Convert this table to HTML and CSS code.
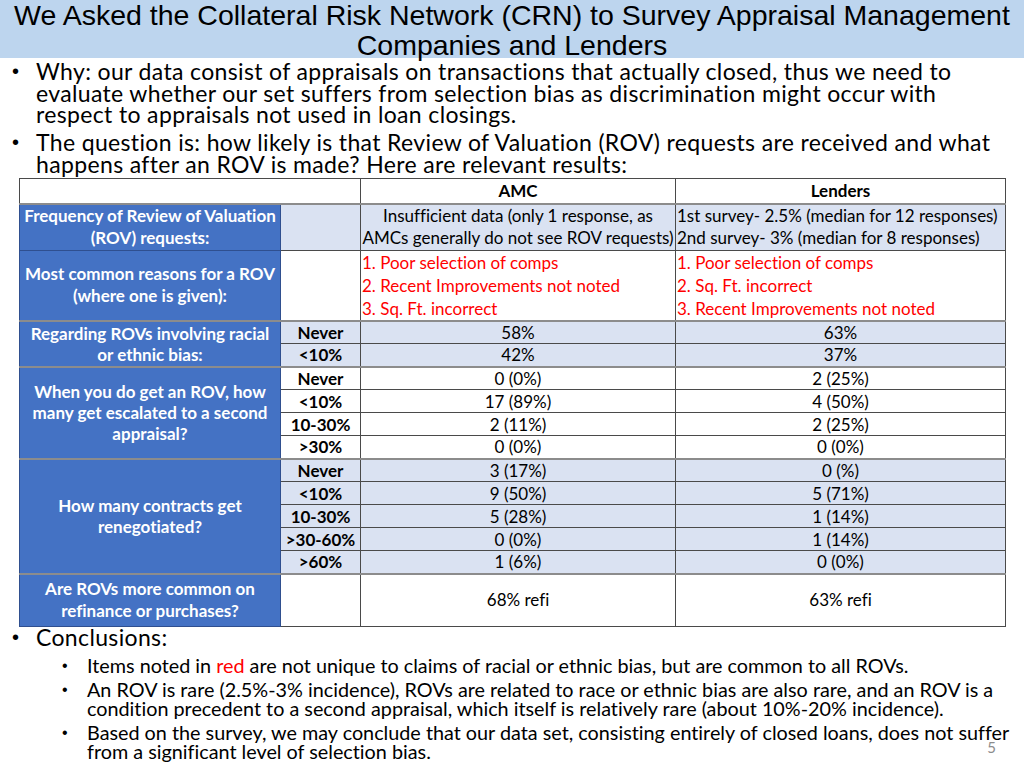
FILE: index.html
```html
<!DOCTYPE html>
<html lang="en">
<head>
<meta charset="utf-8">
<title>CRN Survey</title>
<link rel="stylesheet" href="styles.css">
</head>
<body>
<div class="slide">
  <header class="title-band">
    <h1 class="title">We Asked the Collateral Risk Network (CRN) to Survey Appraisal Management<br>Companies and Lenders</h1>
  </header>

  <div class="bullets intro">
    <div class="bullet">
      <span class="dot">•</span>
      <p class="btext">Why: our data consist of appraisals on transactions that actually closed, thus we need to<br>evaluate whether our set suffers from selection bias as discrimination might occur with<br>respect to appraisals not used in loan closings.</p>
    </div>
    <div class="bullet b2">
      <span class="dot">•</span>
      <p class="btext">The question is: how likely is that Review of Valuation (ROV) requests are received and what<br>happens after an ROV is made? Here are relevant results:</p>
    </div>
  </div>

  <div class="table-wrap">
    <table class="results">
      <colgroup>
        <col class="c-label"><col class="c-sub"><col class="c-amc"><col class="c-len">
      </colgroup>
      <tr class="r-head">
        <td colspan="2" class="blank"></td>
        <td class="hd">AMC</td>
        <td class="hd">Lenders</td>
      </tr>
      <tr class="r-freq shade sec">
        <td class="lbl">Frequency of Review of Valuation<br>(ROV) requests:</td>
        <td class="sub"></td>
        <td class="val">Insufficient data (only 1 response, as<br>AMCs generally do not see ROV requests)</td>
        <td class="val left">1st survey- 2.5% (median for 12 responses)<br>2nd survey- 3% (median for 8 responses)</td>
      </tr>
      <tr class="r-reasons">
        <td class="lbl">Most common reasons for a ROV<br>(where one is given):</td>
        <td class="sub"></td>
        <td class="val left red">1. Poor selection of comps<br>2. Recent Improvements not noted<br>3. Sq. Ft. incorrect</td>
        <td class="val left red">1. Poor selection of comps<br>2. Sq. Ft. incorrect<br>3. Recent Improvements not noted</td>
      </tr>
      <tr class="r shade sec">
        <td class="lbl" rowspan="2">Regarding ROVs involving racial<br>or ethnic bias:</td>
        <td class="sub">Never</td><td class="val">58%</td><td class="val">63%</td>
      </tr>
      <tr class="r shade">
        <td class="sub">&lt;10%</td><td class="val">42%</td><td class="val">37%</td>
      </tr>
      <tr class="r sec">
        <td class="lbl" rowspan="4">When you do get an ROV, how<br>many get escalated to a second<br>appraisal?</td>
        <td class="sub">Never</td><td class="val">0 (0%)</td><td class="val">2 (25%)</td>
      </tr>
      <tr class="r"><td class="sub">&lt;10%</td><td class="val">17 (89%)</td><td class="val">4 (50%)</td></tr>
      <tr class="r"><td class="sub">10-30%</td><td class="val">2 (11%)</td><td class="val">2 (25%)</td></tr>
      <tr class="r"><td class="sub">&gt;30%</td><td class="val">0 (0%)</td><td class="val">0 (0%)</td></tr>
      <tr class="r shade sec">
        <td class="lbl" rowspan="5">How many contracts get<br>renegotiated?</td>
        <td class="sub">Never</td><td class="val">3 (17%)</td><td class="val">0 (%)</td>
      </tr>
      <tr class="r shade"><td class="sub">&lt;10%</td><td class="val">9 (50%)</td><td class="val">5 (71%)</td></tr>
      <tr class="r shade"><td class="sub">10-30%</td><td class="val">5 (28%)</td><td class="val">1 (14%)</td></tr>
      <tr class="r shade"><td class="sub">&gt;30-60%</td><td class="val">0 (0%)</td><td class="val">1 (14%)</td></tr>
      <tr class="r shade"><td class="sub">&gt;60%</td><td class="val">1 (6%)</td><td class="val">0 (0%)</td></tr>
      <tr class="r-refi sec">
        <td class="lbl">Are ROVs more common on<br>refinance or purchases?</td>
        <td class="sub"></td>
        <td class="val">68% refi</td>
        <td class="val">63% refi</td>
      </tr>
    </table>
  </div>

  <div class="bullets concl">
    <div class="bullet">
      <span class="dot">•</span>
      <p class="btext">Conclusions:</p>
    </div>
    <ul class="subs">
      <li class="sb"><span class="sdot">•</span><p class="stext">Items noted in <span class="red">red</span> are not unique to claims of racial or ethnic bias, but are common to all ROVs.</p></li>
      <li class="sb"><span class="sdot">•</span><p class="stext">An ROV is rare (2.5%-3% incidence), ROVs are related to race or ethnic bias are also rare, and an ROV is a<br>condition precedent to a second appraisal, which itself is relatively rare (about 10%-20% incidence).</p></li>
      <li class="sb"><span class="sdot">•</span><p class="stext">Based on the survey, we may conclude that our data set, consisting entirely of closed loans, does not suffer<br>from a significant level of selection bias.</p></li>
    </ul>
  </div>

  <div class="page-num">5</div>
</div>
</body>
</html>
```

FILE: styles.css
```css
* { box-sizing: border-box; }
html, body { margin: 0; padding: 0; background: #ffffff; }
body { width: 1024px; height: 768px; overflow: hidden; }

.slide {
  position: relative;
  width: 1024px;
  height: 768px;
  font-family: Lato, "Open Sans", sans-serif;
  font-variant-ligatures: none;
  color: #000;
}

.title-band {
  background: #bdd5ee;
  height: 58px;
}
.title {
  margin: 0;
  font-family: "Liberation Sans", Arial, sans-serif;
  font-weight: normal;
  font-size: 28.5px;
  line-height: 30px;
  text-align: center;
  white-space: nowrap;
}

.bullets { padding-left: 12px; }
.intro { padding-top: 3px; }
.bullet { display: flex; align-items: flex-start; }
.dot {
  width: 24px;
  flex: none;
  font-size: 20px;
  line-height: 21.5px;
  font-family: "Liberation Sans", Arial, sans-serif;
}
.btext {
  margin: 0;
  font-size: 23px;
  letter-spacing: 0.35px;
  line-height: 21.5px;
  white-space: nowrap;
}
.b2 { margin-top: 6.5px; }

.table-wrap { padding: 3px 0 0 19px; }
.results {
  border-collapse: collapse;
  table-layout: fixed;
  width: 986px;
  font-size: 17px;
  line-height: 22.5px;
}
.c-label { width: 261px; }
.c-sub { width: 80px; }
.c-amc { width: 315px; }
.c-len { width: 330px; }

.results td {
  border: 1px solid #4a4a4a;
  padding: 0;
  text-align: center;
  vertical-align: middle;
  white-space: nowrap;
  overflow: hidden;
}
.results tr.sec td { border-top: 2px solid #8c8c8c; }

.r-head td { height: 25px; }
.hd { font-weight: bold; }
.r-freq td { height: 45px; }
.r-reasons td { height: 70px; }
.r td { height: 23px; line-height: 21px; }
.r-refi td { height: 53px; }

.shade td { background: #dae2f2; }
.results td.lbl {
  background: #4472c4;
  color: #ffffff;
  font-weight: bold;
  border-color: #2f4f8f;
}
.sub { font-weight: bold; }
.left { text-align: left !important; padding-left: 1px !important; }
.red { color: #ff0000; }
.r-reasons .val { line-height: 23px; }

.subs { list-style: none; margin: 7px 0 0 0; padding: 0 0 0 50px; }
.sb { display: flex; align-items: flex-start; margin-bottom: 5px; }
.sdot {
  width: 25px;
  flex: none;
  font-size: 16px;
  line-height: 19px;
  font-family: "Liberation Sans", Arial, sans-serif;
}
.stext {
  margin: 0;
  font-size: 19.8px;
  line-height: 19px;
  white-space: nowrap;
}

.page-num {
  position: absolute;
  right: 28px;
  top: 738px;
  font-size: 15px;
  color: #8c8c8c;
}
```
